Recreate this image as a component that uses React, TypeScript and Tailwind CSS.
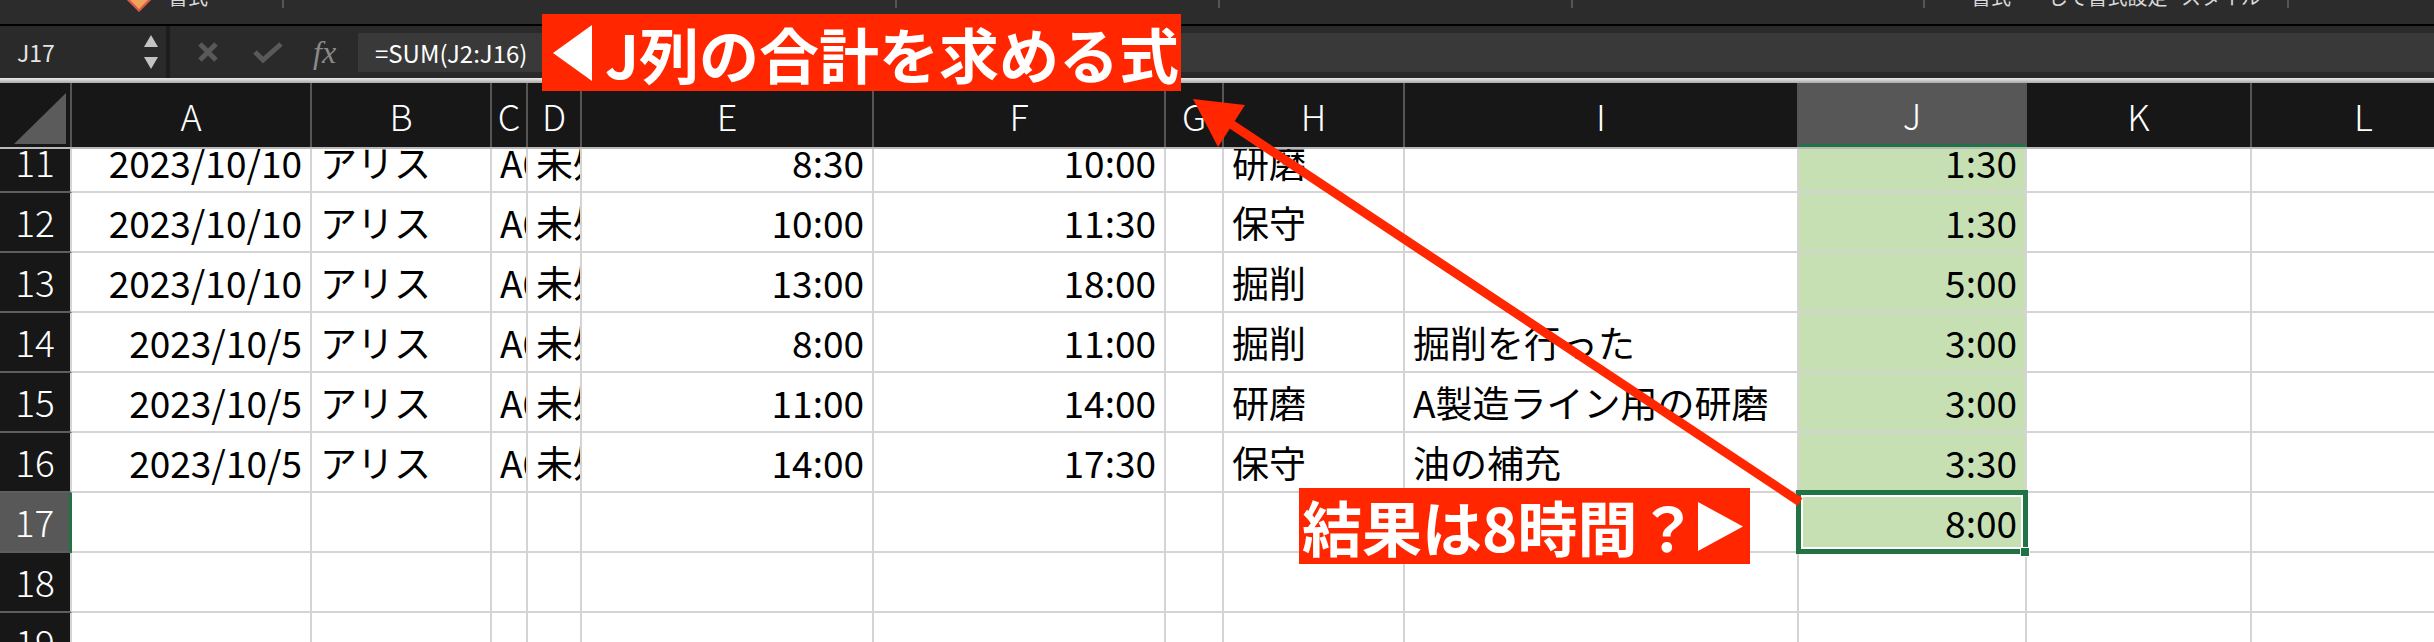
import React from "react";

type Col = { key: string; w: string; align: "left" | "right" };

const cols: Col[] = [
  { key: "A", w: "w-[240px]", align: "right" },
  { key: "B", w: "w-[180px]", align: "left" },
  { key: "C", w: "w-[36px]", align: "left" },
  { key: "D", w: "w-[54px]", align: "left" },
  { key: "E", w: "w-[292px]", align: "right" },
  { key: "F", w: "w-[292px]", align: "right" },
  { key: "G", w: "w-[58px]", align: "left" },
  { key: "H", w: "w-[181px]", align: "left" },
  { key: "I", w: "w-[394px]", align: "left" },
  { key: "J", w: "w-[228px]", align: "right" },
  { key: "K", w: "w-[225px]", align: "left" },
  { key: "L", w: "w-[225px]", align: "left" },
];

type Row = { n: number; cells: Record<string, string> };

const work = (a: string, e: string, f: string, h: string, i: string, j: string) => ({
  A: a, B: "アリス", C: "A001", D: "未処理", E: e, F: f, H: h, I: i, J: j,
});

const rows: Row[] = [
  { n: 11, cells: work("2023/10/10", "8:30", "10:00", "研磨", "", "1:30") },
  { n: 12, cells: work("2023/10/10", "10:00", "11:30", "保守", "", "1:30") },
  { n: 13, cells: work("2023/10/10", "13:00", "18:00", "掘削", "", "5:00") },
  { n: 14, cells: work("2023/10/5", "8:00", "11:00", "掘削", "掘削を行った", "3:00") },
  { n: 15, cells: work("2023/10/5", "11:00", "14:00", "研磨", "A製造ライン用の研磨", "3:00") },
  { n: 16, cells: work("2023/10/5", "14:00", "17:30", "保守", "油の補充", "3:30") },
  { n: 17, cells: { J: "8:00" } },
  { n: 18, cells: {} },
  { n: 19, cells: {} },
];

function RibbonBar() {
  // only the bottom edge of the ribbon is visible in the shot
  return (
    <div className="h-[24px] bg-[#2c2c2c] overflow-hidden flex items-start text-[20px] leading-[20px] text-[#d8d8d8]">
      <div className="w-[130px] shrink-0" />
      <div className="w-[18px] h-[18px] -mt-[10px] rotate-45 bg-[#f0a35a] border-2 border-[#e2574c] shrink-0" />
      <div className="w-[20px] shrink-0" />
      <span className="-mt-[13px] shrink-0">書式</span>
      <div className="w-[74px] shrink-0" />
      <div className="w-[2px] h-[8px] bg-[#555] shrink-0" />
      <div className="w-[611px] shrink-0" />
      <div className="w-[2px] h-[8px] bg-[#555] shrink-0" />
      <div className="w-[321px] shrink-0" />
      <div className="w-[2px] h-[8px] bg-[#555] shrink-0" />
      <div className="w-[351px] shrink-0" />
      <div className="w-[2px] h-[8px] bg-[#555] shrink-0" />
      <div className="w-[350px] shrink-0" />
      <div className="w-[2px] h-[8px] bg-[#555] shrink-0" />
      <div className="w-[46px] shrink-0" />
      <span className="-mt-[13px] w-[77px] shrink-0">書式</span>
      <span className="-mt-[13px] w-[133px] shrink-0">して書式設定</span>
      <span className="-mt-[13px] w-[106px] shrink-0">スタイル</span>
      <div className="w-[2px] h-[8px] bg-[#555] shrink-0" />
    </div>
  );
}

function FormulaBar() {
  return (
    <div className="h-[52px] bg-[#2a2a2a] flex items-stretch">
      <div className="w-[166px] shrink-0 flex items-center pl-[17px] pr-[8px]">
        <span className="text-[23px] text-[#e4e4e4] leading-none">J17</span>
        <div className="ml-auto flex flex-col gap-[10px]">
          <svg width="14" height="12" viewBox="0 0 14 12">
            <polygon points="7,0 14,12 0,12" fill="#c4c4c4" />
          </svg>
          <svg width="14" height="12" viewBox="0 0 14 12">
            <polygon points="0,0 14,0 7,12" fill="#c4c4c4" />
          </svg>
        </div>
      </div>
      <div className="w-[4px] shrink-0 bg-[#1d1d1d]" />
      <div className="w-[188px] shrink-0 flex items-center">
        <svg className="ml-[27px]" width="22" height="20" viewBox="0 0 22 20">
          <path d="M3 2 L19 18 M19 2 L3 18" stroke="#595959" strokeWidth="5" />
        </svg>
        <svg className="ml-[34px]" width="30" height="21" viewBox="0 0 30 21">
          <path d="M2 10 L10 18 L28 2" stroke="#595959" strokeWidth="5" fill="none" />
        </svg>
        <span className="ml-[30px] font-['Liberation_Serif',serif] italic text-[32px] leading-none text-[#8a8a8a]">
          fx
        </span>
      </div>
      <div className="flex-1 my-[7px] mb-[6px] bg-[#393939] flex items-center pl-[17px]">
        <span className="text-[24px] text-white leading-none">=SUM(J2:J16)</span>
      </div>
    </div>
  );
}

function ColumnHeader() {
  return (
    <div className="flex h-[66px] border-b-2 border-[#b9b9b9] bg-[#171717]">
      <div className="w-[72px] shrink-0 border-r-2 border-[#555] relative">
        <svg className="absolute left-0 top-0" width="70" height="64" viewBox="0 0 70 64">
          <polygon points="14,61 66,10 66,61" fill="#5b5b5b" />
        </svg>
      </div>
      {cols.map((c) => (
        <div
          key={c.key}
          className={`${c.w} shrink-0 flex items-center justify-center text-[36px] font-light text-white border-r-2 border-[#555] ${
            c.key === "J" ? "bg-[#575757] border-b-[3px] border-b-[#217346]" : ""
          }`}
        >
          {c.key}
        </div>
      ))}
    </div>
  );
}

function SheetRow({ row }: { row: Row }) {
  const current = row.n === 17;
  return (
    <div className="flex h-[60px]">
      <div
        className={`w-[72px] shrink-0 flex items-center justify-center text-[37px] font-light text-white border-b-2 border-b-[#5e5e5e] ${
          current ? "bg-[#585858] border-r-[3px] border-r-[#217346]" : "bg-[#171717] border-r-2 border-r-[#d4d4d4]"
        }`}
      >
        {row.n}
      </div>
      {cols.map((c) => {
        const v = row.cells[c.key] ?? "";
        const green = c.key === "J" && row.n <= 17;
        return (
          <div
            key={c.key}
            className={`${c.w} shrink-0 relative border-r-2 border-b-2 border-[#d4d4d4] ${green ? "bg-[#c6e0b4]" : "bg-white"}`}
          >
            <div
              className={`h-full overflow-hidden flex items-center px-[8px] ${
                c.align === "right" ? "justify-end" : "justify-start"
              }`}
            >
              <span className="shrink-0 whitespace-nowrap text-[37px] leading-none text-black">{v}</span>
            </div>
            {current && c.key === "J" && (
              <div className="absolute -left-[3px] -top-[3px] -right-[3px] -bottom-[3px] border-[5px] border-[#217346] z-10">
                <div className="absolute inset-0 border-2 border-white" />
                <div className="absolute -right-[7px] -bottom-[8px] w-[10px] h-[10px] bg-[#217346] border border-white" />
              </div>
            )}
          </div>
        );
      })}
    </div>
  );
}

export default function App() {
  return (
    <div className="relative w-[2434px] h-[642px] overflow-hidden bg-white font-['Noto_Sans_CJK_JP',sans-serif]">
      <RibbonBar />
      <div className="h-[2px] bg-black" />
      <FormulaBar />
      <div className="h-[5px] bg-linear-to-b from-[#ececec] to-[#a9a9a9]" />
      <ColumnHeader />
      <div className="h-[493px] overflow-hidden">
        <div className="-mt-[16px]">
          {rows.map((r) => (
            <SheetRow key={r.n} row={r} />
          ))}
        </div>
      </div>

      {/* callout arrow */}
      <svg className="absolute left-0 top-0 z-20 pointer-events-none" width="2434" height="642" viewBox="0 0 2434 642">
        <line x1="1228" y1="122" x2="1800" y2="502" stroke="#ff2600" strokeWidth="9" />
        <polygon points="1193,99 1245,105 1218,147" fill="#ff2600" />
      </svg>

      {/* callout labels */}
      <div className="absolute left-[542px] top-[14px] w-[639px] h-[77px] bg-[#ff2600] z-30 flex items-center pl-[11px]">
        <svg width="39" height="56" viewBox="0 0 39 56">
          <polygon points="39,0 39,56 0,28" fill="white" />
        </svg>
        <span className="ml-[13px] text-[60px] font-bold text-white leading-none whitespace-nowrap">J列の合計を求める式</span>
      </div>
      <div className="absolute left-[1299px] top-[488px] w-[451px] h-[76px] bg-[#ff2600] z-30 flex items-center pl-[3px]">
        <span className="text-[60px] font-bold text-white leading-none whitespace-nowrap">結果は8時間？</span>
        <svg className="ml-auto mr-[7px]" width="45" height="49" viewBox="0 0 45 49">
          <polygon points="0,0 45,24.5 0,49" fill="white" />
        </svg>
      </div>
    </div>
  );
}
